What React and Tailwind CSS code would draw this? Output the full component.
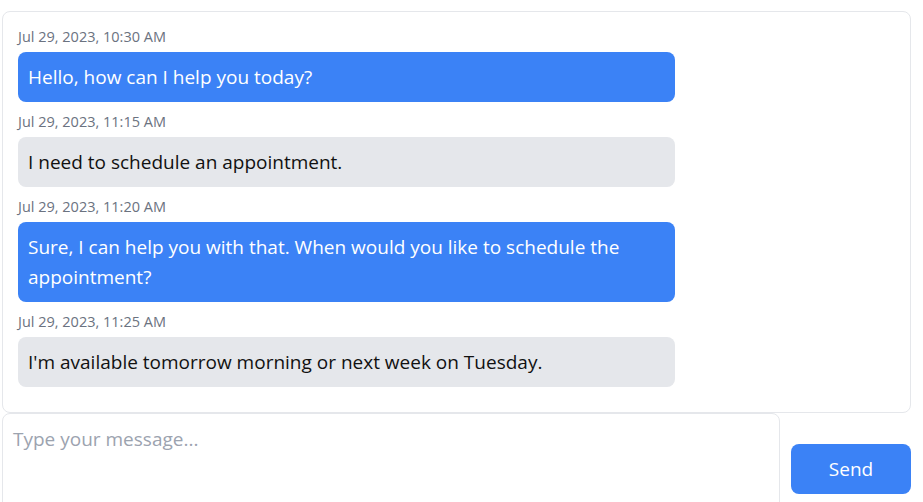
import React, { useState } from 'react';

const messages = [
  { id: 1, time: 'Jul 29, 2023, 10:30 AM', text: 'Hello, how can I help you today?', mine: true },
  { id: 2, time: 'Jul 29, 2023, 11:15 AM', text: 'I need to schedule an appointment.', mine: false },
  { id: 3, time: 'Jul 29, 2023, 11:20 AM', text: 'Sure, I can help you with that. When would you like to schedule the appointment?', mine: true },
  { id: 4, time: 'Jul 29, 2023, 11:25 AM', text: "I'm available tomorrow morning or next week on Tuesday.", mine: false },
];

const App = () => {
  const [draft, setDraft] = useState('');

  return (
    <div className="w-[923px] h-[502px] overflow-hidden bg-white pt-[11px] pl-0.5 pr-3 font-['Open_Sans',sans-serif]">
      {/* История сообщений */}
      <div className="border border-[#e5e7eb] rounded-lg pl-[15px] pr-4 pt-[15px] pb-[15px]">
        {messages.map((m) => (
          <div key={m.id} className="mb-2.5">
            <div className="text-[14.5px] leading-5 text-[#6b7280] mb-[5px]">{m.time}</div>
            <div
              className={
                m.mine
                  ? 'w-3/4 rounded-lg p-2.5 text-[19px] leading-[30px] bg-[#3b82f6] text-white'
                  : 'w-3/4 rounded-lg p-2.5 text-[19px] leading-[30px] bg-[#e5e7eb] text-[#111]'
              }
            >
              {m.text}
            </div>
          </div>
        ))}
      </div>

      {/* Ввод сообщения */}
      <div className="flex items-center">
        <textarea
          value={draft}
          onChange={(e) => setDraft(e.target.value)}
          placeholder="Type your message..."
          className="flex-1 h-[112px] resize-none border border-[#e5e7eb] rounded-lg p-2.5 text-[19px] leading-[30px] placeholder-[#9ca3af] outline-none"
        />
        <button className="ml-[11px] w-[120px] h-[50px] rounded-lg bg-[#3b82f6] text-white text-[19px]">
          Send
        </button>
      </div>
    </div>
  );
};

export default App;
